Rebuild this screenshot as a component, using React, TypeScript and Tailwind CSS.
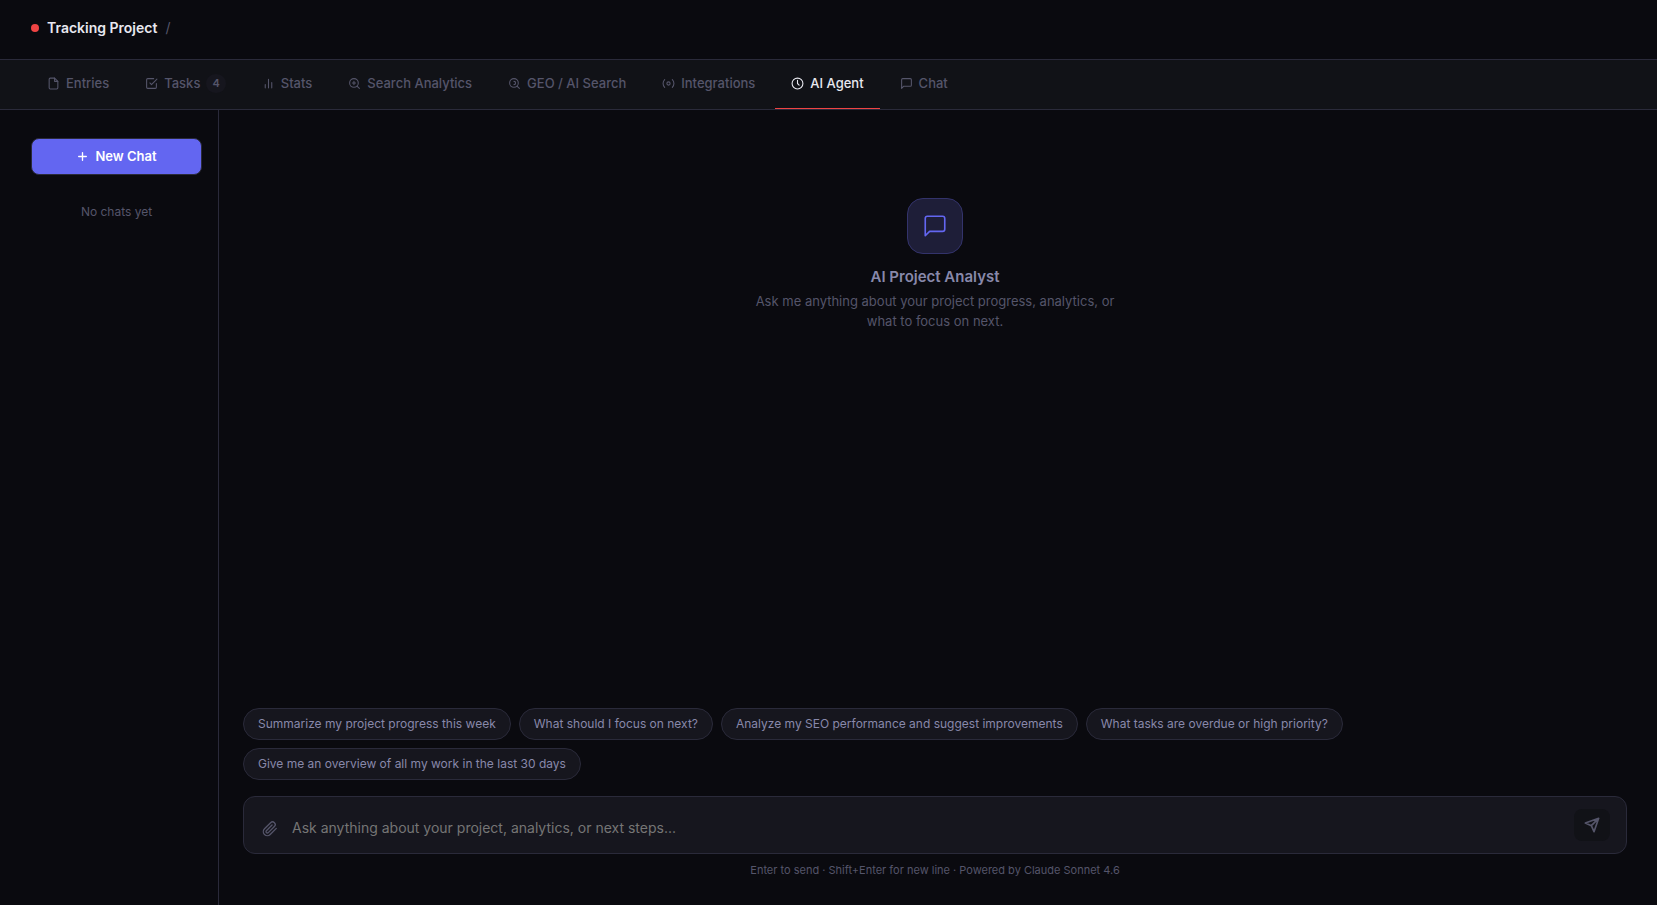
import type { ReactNode } from "react";

type IconProps = { size: number; width?: number; children: ReactNode };

function Icon({ size, width = 2, children }: IconProps) {
  return (
    <svg
      width={size}
      height={size}
      viewBox="0 0 24 24"
      fill="none"
      stroke="currentColor"
      strokeWidth={width}
      strokeLinecap="round"
      strokeLinejoin="round"
      aria-hidden="true"
      className="shrink-0"
    >
      {children}
    </svg>
  );
}

const bubble = <path d="M21 15a2 2 0 0 1-2 2H7l-4 4V5a2 2 0 0 1 2-2h14a2 2 0 0 1 2 2z" />;

type Tab = { label: string; icon: ReactNode; count?: number; active?: boolean };

const tabs: Tab[] = [
  {
    label: "Entries",
    icon: (
      <>
        <path d="M14 2H6a2 2 0 0 0-2 2v16a2 2 0 0 0 2 2h12a2 2 0 0 0 2-2V8z" />
        <path d="M14 2v6h6" />
      </>
    ),
  },
  {
    label: "Tasks",
    count: 4,
    icon: (
      <>
        <path d="M9 11l3 3L22 4" />
        <path d="M21 12v7a2 2 0 0 1-2 2H5a2 2 0 0 1-2-2V5a2 2 0 0 1 2-2h11" />
      </>
    ),
  },
  {
    label: "Stats",
    icon: <path d="M18 20V10M12 20V4M6 20v-6" />,
  },
  {
    label: "Search Analytics",
    icon: (
      <>
        <circle cx="11" cy="11" r="8" />
        <path d="M21 21l-4.35-4.35M11 8v6M8 11h6" />
      </>
    ),
  },
  {
    label: "GEO / AI Search",
    icon: (
      <>
        <circle cx="11" cy="11" r="8" />
        <path d="M21 21l-4.35-4.35M11 8a3 3 0 0 1 0 6" />
      </>
    ),
  },
  {
    label: "Integrations",
    icon: (
      <>
        <circle cx="12" cy="12" r="3" />
        <path d="M19.07 4.93a10 10 0 0 1 0 14.14M4.93 4.93a10 10 0 0 0 0 14.14" />
      </>
    ),
  },
  {
    label: "AI Agent",
    active: true,
    icon: (
      <>
        <circle cx="12" cy="12" r="10" />
        <path d="M12 6v6l3 3" />
      </>
    ),
  },
  { label: "Chat", icon: bubble },
];

const suggestions = [
  "Summarize my project progress this week",
  "What should I focus on next?",
  "Analyze my SEO performance and suggest improvements",
  "What tasks are overdue or high priority?",
  "Give me an overview of all my work in the last 30 days",
];

export default function App() {
  return (
    <div className="flex min-h-screen flex-col bg-[#0a0a0f] font-['Inter',sans-serif] text-[#e8e8f0]">
      <header className="flex h-[60px] items-center gap-2 border-b border-[#2a2a3a] px-[31px] pb-1">
        <span className="size-2 rounded-full bg-[#ef4444]" />
        <h1 className="text-sm font-semibold">Tracking Project</h1>
        <span className="text-sm text-[#55556a]">/</span>
      </header>

      <nav className="flex h-[50px] gap-1 border-b border-[#2a2a3a] bg-[#111217] px-[31px]">
        {tabs.map((tab) => (
          <a
            key={tab.label}
            href="#"
            aria-current={tab.active ? "page" : undefined}
            className={
              tab.active
                ? "flex items-center gap-1.5 border-b border-[#ef4444] px-4 pb-px text-[13px] font-medium text-[#e8e8f0]"
                : "flex items-center gap-1.5 border-b border-transparent px-4 pb-px text-[13px] font-medium text-[#55556a]"
            }
          >
            <Icon size={13}>{tab.icon}</Icon>
            {tab.label}
            {tab.count !== undefined && (
              <span className="rounded-full bg-[#16161e] px-1.5 py-px text-[11px] font-semibold">
                {tab.count}
              </span>
            )}
          </a>
        ))}
      </nav>

      <div className="flex grow">
        <aside className="w-[219px] shrink-0 border-r border-[#2a2a3a] pt-7 pr-4 pl-[31px]">
          <button
            type="button"
            className="flex h-[37px] w-full items-center justify-center gap-1.5 rounded-lg border border-[#2a2a3a] bg-[#6366f1] text-[13px] font-semibold text-white"
          >
            <Icon size={13} width={2.5}>
              <path d="M12 5v14M5 12h14" />
            </Icon>
            New Chat
          </button>
          <p className="mt-7 text-center text-xs leading-[18px] text-[#55556a]">No chats yet</p>
        </aside>

        <main className="flex grow flex-col pr-[30px] pb-[27px] pl-6">
          <section className="flex grow flex-col items-center pt-[88px] text-center">
            <div className="flex size-14 items-center justify-center rounded-2xl border border-[#33336b] bg-[#1e1e38] text-[#6366f1]">
              <Icon size={26} width={1.5}>
                {bubble}
              </Icon>
            </div>
            <h2 className="mt-3 text-[15px] leading-[22px] font-semibold text-[#8888aa]">
              AI Project Analyst
            </h2>
            <p className="mt-[3px] max-w-[360px] text-[13px] leading-5 text-[#55556a]">
              Ask me anything about your project progress, analytics, or what to focus on next.
            </p>
          </section>

          <div className="flex flex-wrap gap-2">
            {suggestions.map((text) => (
              <button
                key={text}
                type="button"
                className="h-8 rounded-full border border-[#2a2a3a] bg-[#16161e] px-3.5 text-xs text-[#8888aa]"
              >
                {text}
              </button>
            ))}
          </div>

          <form className="mt-4 flex h-[58px] items-center gap-3 rounded-xl border border-[#2a2a3a] bg-[#16161e] px-4">
            <button type="button" aria-label="Attach file" className="mt-2 p-0.5 text-[#55556a]">
              <Icon size={16}>
                <path d="M21.44 11.05l-9.19 9.19a6 6 0 0 1-8.49-8.49l9.19-9.19a4 4 0 0 1 5.66 5.66l-9.2 9.19a2 2 0 0 1-2.83-2.83l8.49-8.48" />
              </Icon>
            </button>
            <textarea
              rows={1}
              aria-label="Message"
              placeholder="Ask anything about your project, analytics, or next steps..."
              className="mt-1.5 grow resize-none text-sm leading-6 outline-none placeholder:text-[#757575]"
            />
            <button
              type="submit"
              aria-label="Send"
              className="flex h-8 w-9 items-center justify-center rounded-lg bg-[#111217] text-[#55556a]"
            >
              <Icon size={16} width={2.5}>
                <path d="M22 2L11 13M22 2l-7 20-4-9-9-4z" />
              </Icon>
            </button>
          </form>
          <p className="mt-2 text-center text-[11px] leading-4 text-[#55556a]">
            Enter to send · Shift+Enter for new line · Powered by Claude Sonnet 4.6
          </p>
        </main>
      </div>
    </div>
  );
}
